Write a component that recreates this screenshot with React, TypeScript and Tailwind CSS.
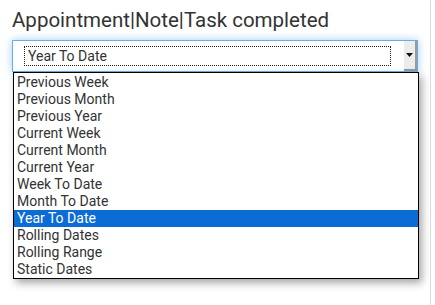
import React from "react";

const options = [
  "Previous Week",
  "Previous Month",
  "Previous Year",
  "Current Week",
  "Current Month",
  "Current Year",
  "Week To Date",
  "Month To Date",
  "Year To Date",
  "Rolling Dates",
  "Rolling Range",
  "Static Dates",
];

export default function App() {
  const selected = "Year To Date";

  return (
    <div className="relative w-[435px] h-[305px] bg-white overflow-hidden" style={{ fontFamily: "Roboto, 'Liberation Sans', sans-serif" }}>
      <div className="w-[431px] h-full border-r border-[#dcdcdc] px-3 pt-[9px]">
        {/* titre */}
        <h3 className="text-[20.5px] leading-[22px] text-[#333] font-normal">Appointment|Note|Task completed</h3>

        {/* select ouvert */}
        <div className="mt-[9px] flex h-[32px] w-[406px] border border-[#66afe9] bg-white shadow-[0_0_8px_rgba(102,175,233,0.6)]">
          <div className="flex-1 pl-[11px] pt-[5px]">
            <div className="h-[20px] w-[367px] border border-dotted border-[#222] pl-[3px] text-[14px] leading-[18px] text-[#333]">
              {selected}
            </div>
          </div>
          <div className="w-[13px] h-full bg-[#ececec] border-r-2 border-b-2 border-[#9a9a9a] flex items-center justify-center">
            <svg width="7" height="4" viewBox="0 0 7 4">
              <path d="M0 0h7L3.5 4z" fill="#111" />
            </svg>
          </div>
        </div>
      </div>

      {/* liste déroulante */}
      <ul className="absolute left-[13px] top-[72px] w-[406px] h-[207px] border border-black bg-white py-[1px] shadow-[3px_4px_8px_rgba(0,0,0,0.35)]">
        {options.map((o) => (
          <li
            key={o}
            className={
              o === selected
                ? "h-[17px] leading-[17px] pl-[3px] text-[14px] bg-[#0a6cd4] text-white"
                : "h-[17px] leading-[17px] pl-[3px] text-[14px] text-[#333]"
            }
          >
            {o}
          </li>
        ))}
      </ul>
    </div>
  );
}
